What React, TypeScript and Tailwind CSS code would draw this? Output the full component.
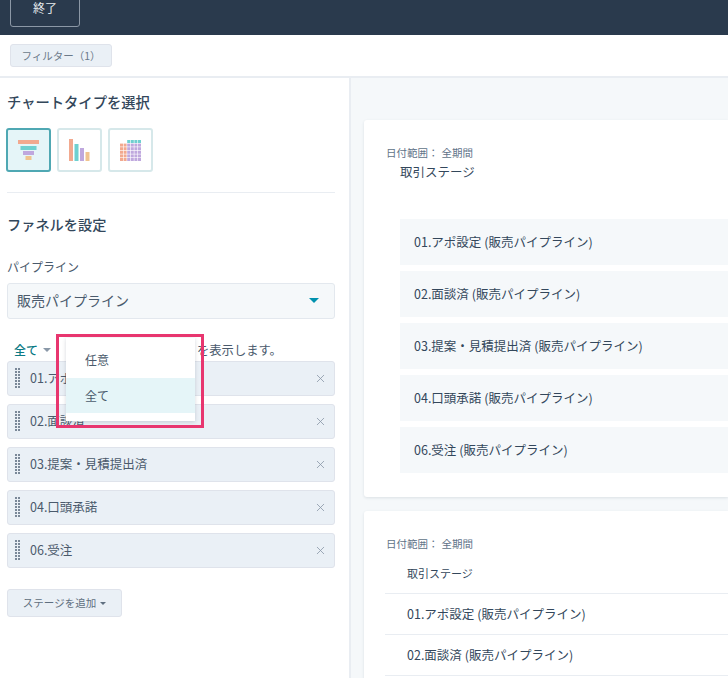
import { X } from "lucide-react";

const font = { fontFamily: '"Noto Sans CJK JP", "Noto Sans", sans-serif' };

const stages = ["01.アポ設定", "02.面談済", "03.提案・見積提出済", "04.口頭承諾", "06.受注"];

function Grip() {
  return (
    <svg width="5" height="21" viewBox="0 0 5 21" className="shrink-0 text-[#7a8898]" fill="currentColor">
      {[0, 1, 2, 3, 4, 5, 6].map((i) => (
        <g key={i}>
          <rect x="0" y={i * 3} width="2" height="2" />
          <rect x="3" y={i * 3} width="2" height="2" />
        </g>
      ))}
    </svg>
  );
}

function FunnelIcon() {
  return (
    <svg width="22" height="20" viewBox="0 0 22 20">
      <rect x="0" y="0" width="21" height="4" fill="#f2a98f" />
      <rect x="2.500" y="6" width="16" height="4" fill="#6fd0d0" />
      <rect x="5" y="11" width="11" height="4" fill="#bfa8de" />
      <rect x="7.500" y="16" width="6" height="4" fill="#f0c48f" />
    </svg>
  );
}

function BarsIcon() {
  return (
    <svg width="21" height="22" viewBox="0 0 21 22">
      <rect x="0" y="0" width="4" height="22" fill="#f2a98f" />
      <rect x="5.500" y="5" width="4" height="17" fill="#6fd0d0" />
      <rect x="11" y="9" width="4" height="13" fill="#bfa8de" />
      <rect x="16.500" y="13" width="4" height="9" fill="#f0c48f" />
    </svg>
  );
}

function GridIcon() {
  const cells = [];
  for (let r = 0; r < 6; r++) {
    for (let c = 0; c < 6; c++) {
      if (r === 0 && c < 2) continue;
      const fill = r === 0 ? "#6fd0d0" : c < 2 ? "#f2a98f" : "#bfa8de";
      cells.push(<rect key={`${r}-${c}`} x={c * 3.6} y={r * 3.6} width="3" height="3" fill={fill} />);
    }
  }
  return (
    <svg width="21" height="21" viewBox="0 0 21 21">
      {cells}
    </svg>
  );
}

function ChartButton({ active, children }: { active?: boolean; children: React.ReactNode }) {
  return (
    <div
      className={
        active
          ? "flex h-[44px] w-[45px] items-center justify-center rounded-[3px] border-2 border-[#4fa8b3] bg-[#e5f5f8]"
          : "flex h-[44px] w-[45px] items-center justify-center rounded-[3px] border-2 border-[#d6e8ea] bg-white"
      }
    >
      {children}
    </div>
  );
}

function StageRow({ label }: { label: string }) {
  return (
    <div className="flex h-[35px] items-center rounded-[3px] border border-[#dfe3eb] bg-[#eaf0f6] pl-[7px] pr-[7px]">
      <Grip />
      <span className="ml-[10px] flex-1 text-[12.500px] text-[#4a5a6c]">{label}</span>
      <X size={13} strokeWidth={1.5} className="text-[#8a98a8]" />
    </div>
  );
}

function Sidebar() {
  return (
    <aside className="w-[351px] shrink-0 border-r-2 border-[#e9edf2] bg-white pl-[7px] pr-[14px]">
      <h2 className="pt-[13px] text-[14.300px] leading-[22px] font-medium text-[#33475b]">チャートタイプを選択</h2>
      <div className="mt-[15px] -ml-[1px] flex gap-[6px]">
        <ChartButton active>
          <FunnelIcon />
        </ChartButton>
        <ChartButton>
          <BarsIcon />
        </ChartButton>
        <ChartButton>
          <GridIcon />
        </ChartButton>
      </div>
      <div className="mt-[20px] h-px bg-[#e9edf2]" />
      <h2 className="mt-[20px] text-[14.200px] leading-[22px] font-medium text-[#33475b]">ファネルを設定</h2>
      <div className="mt-[23px] text-[12px] leading-[18px] text-[#4a5a6c]">パイプライン</div>
      <div className="mt-[7px] flex h-[36px] items-center justify-between rounded-[3px] border border-[#e3e8ee] bg-[#f5f8fa] pb-[2px] pl-[9px] pr-[15px]">
        <span className="text-[14px] text-[#4a5a6c]">販売パイプライン</span>
        <span className="h-0 w-0 border-x-[5px] border-t-[5px] border-x-transparent border-t-[#0091ae]" />
      </div>
      <div className="mt-[20px] flex h-[22px] items-center pl-[7px] text-[12px] text-[#4a5a6c]">
        <span className="font-medium text-[#0b7a85]">全て</span>
        <span className="ml-[5px] h-0 w-0 border-x-[4px] border-t-[4px] border-x-transparent border-t-[#8a98a8]" />
        <span className="ml-[146px] text-[12.300px]">を表示します。</span>
      </div>
      <div className="flex flex-col gap-[8px]">
        {stages.map((s) => (
          <StageRow key={s} label={s} />
        ))}
      </div>
      <button className="mt-[21px] flex h-[28px] w-[115px] items-center justify-center gap-[3px] rounded-[3px] border border-[#dfe3eb] bg-[#eaf0f6] text-[10.500px] text-[#5f6f80]">
        ステージを追加
        <span className="ml-[1px] h-0 w-0 border-x-[3.500px] border-t-[3.500px] border-x-transparent border-t-[#5f6f80]" />
      </button>
    </aside>
  );
}

function Preview() {
  return (
    <main className="min-w-0 flex-1 overflow-hidden bg-[#f5f8fa] pl-[13px] pt-[42px]">
      <section className="h-[377px] rounded-l-[3px] bg-white pl-[22px] pt-[26px] shadow-[0_1px_3px_rgba(45,62,80,0.12)]">
        <div className="flex gap-[3px] text-[10.500px] leading-[14px] text-[#5f7388]">
          <span>日付範囲：</span>
          <span>全期間</span>
        </div>
        <div className="mt-[2px] pl-[14px] text-[12.500px] leading-[20px] text-[#33475b]">取引ステージ</div>
        <div className="mt-[37px] ml-[14px] flex flex-col gap-[6px]">
          {stages.map((s) => (
            <div key={s} className="flex h-[46px] items-center bg-[#f5f8fa] pl-[14px] text-[12.500px] text-[#33475b]">
              {s} (販売パイプライン)
            </div>
          ))}
        </div>
      </section>
      <section className="mt-[14px] h-[200px] rounded-l-[3px] bg-white pl-[21px] pt-[26px] shadow-[0_1px_3px_rgba(45,62,80,0.12)]">
        <div className="flex gap-[3px] pl-[1px] text-[10.500px] leading-[14px] text-[#5f7388]">
          <span>日付範囲：</span>
          <span>全期間</span>
        </div>
        <div className="mt-[8px] flex h-[35px] items-center border-b border-[#e9edf2] pb-[6px] pl-[22px] text-[11px] text-[#33475b]">
          取引ステージ
        </div>
        {stages.slice(0, 2).map((s) => (
          <div key={s} className="flex h-[41px] items-center border-b border-[#e9edf2] pl-[22px] text-[12.500px] text-[#33475b]">
            {s} (販売パイプライン)
          </div>
        ))}
      </section>
    </main>
  );
}

export default function App() {
  return (
    <div className="relative flex h-[678px] w-[728px] flex-col overflow-hidden bg-white" style={font}>
      <header className="flex h-[35px] shrink-0 items-end bg-[#2a3a4d] pb-[8px] pl-[10px]">
        <button className="flex h-[38px] w-[70px] shrink-0 items-center justify-center rounded-[3px] border border-[#8c98a6] text-[12px] text-[#e6eaee]">
          終了
        </button>
      </header>
      <div className="flex h-[43px] shrink-0 items-center border-b-2 border-[#e9edf2] pl-[10px]">
        <button className="flex h-[23px] w-[102px] items-center justify-center rounded-[3px] border border-[#dfe3eb] bg-[#eaf0f6] text-[10.500px] text-[#6b7a8a]">
          フィルター（1）
        </button>
      </div>
      <div className="flex min-h-0 flex-1">
        <Sidebar />
        <Preview />
      </div>

      {/* dropdown with the annotation box drawn over it */}
      <div className="absolute left-[66px] top-[338px] flex h-[83px] w-[129px] flex-col bg-white pt-[4px] shadow-[0_1px_4px_rgba(45,62,80,0.2)]">
        <div className="flex h-[36px] items-center pl-[19px] text-[12px] text-[#4a5a6c]">任意</div>
        <div className="flex h-[35px] items-center bg-[#e5f5f8] pl-[19px] text-[12px] text-[#4a5a6c]">全て</div>
      </div>
      <div className="absolute left-[56px] top-[334px] h-[94px] w-[148px] border-[3px] border-[#e8366f]" />
    </div>
  );
}
